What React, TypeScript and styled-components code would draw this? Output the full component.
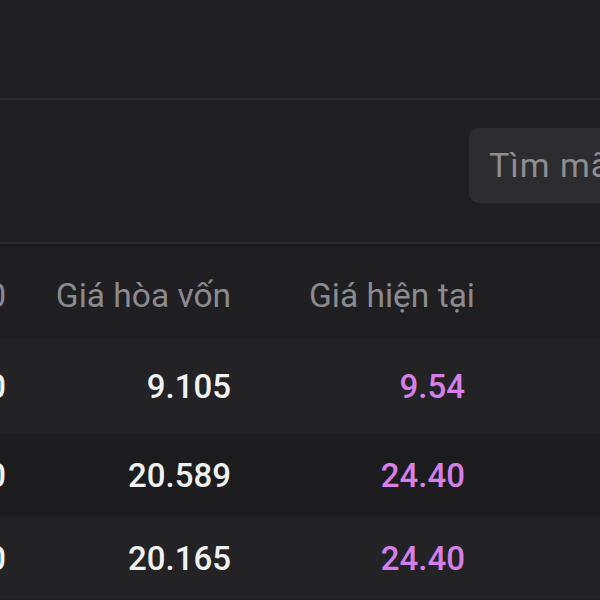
import React from 'react';
import styled, { createGlobalStyle } from 'styled-components';

const GlobalStyle = createGlobalStyle`
  html, body {
    margin: 0;
    padding: 0;
    background: #202023;
  }
  body {
    font-family: Roboto, "Noto Sans", "Liberation Sans", sans-serif;
  }
`;

const Page = styled.div`
  width: 600px;
  height: 600px;
  overflow: hidden;
  background: #202023;
  display: flex;
  flex-direction: column;
`;

const TopBar = styled.div`
  height: 98px;
  flex-shrink: 0;
`;

const Divider = styled.div<{ $double?: boolean }>`
  flex-shrink: 0;
  height: 2px;
  background: #2d2d31;
  border-bottom: ${({ $double }) => ($double ? '2px solid #19191b' : 'none')};
`;

const SearchRow = styled.div`
  height: 142px;
  flex-shrink: 0;
  display: flex;
  align-items: center;
  justify-content: flex-end;
`;

const SearchBox = styled.div`
  width: 170px;
  height: 75px;
  margin-right: -39px;
  margin-top: -12px;
  flex-shrink: 0;
  box-sizing: border-box;
  padding-left: 20px;
  display: flex;
  align-items: center;
  background: #2d2d30;
  border-radius: 10px;
  color: #8e8e92;
  font-size: 34px;
  letter-spacing: 1px;
  white-space: nowrap;
  overflow: hidden;
`;

const Row = styled.div<{ $bg: string; $height: number; $shift?: number }>`
  display: grid;
  grid-template-columns: 6px 225px 244px 1fr;
  align-items: center;
  box-sizing: border-box;
  height: ${({ $height }) => $height}px;
  padding-top: ${({ $shift }) => $shift ?? 0}px;
  flex-shrink: 0;
  background: ${({ $bg }) => $bg};
`;

const Cell = styled.div<{ $pad?: number }>`
  display: flex;
  justify-content: flex-end;
  overflow: hidden;
  white-space: nowrap;
  padding-right: ${({ $pad }) => $pad ?? 0}px;
`;

const HeadText = styled.span`
  font-size: 33.5px;
  color: #8b8b8f;
`;

const Value = styled.span<{ $purple?: boolean }>`
  font-size: 33px;
  font-weight: 500;
  color: ${({ $purple }) => ($purple ? '#d77fe8' : '#f2f2f2')};
`;

const rows = [
  { lead: '0', cost: '9.105', price: '9.54', bg: '#232326', height: 95 },
  { lead: '0', cost: '20.589', price: '24.40', bg: '#1c1c1f', height: 83 },
  { lead: '0', cost: '20.165', price: '24.40', bg: '#232326', height: 82 },
];

export default function App() {
  return (
    <>
      <GlobalStyle />
      <Page>
        <TopBar />
        <Divider />
        <SearchRow>
          <SearchBox>Tìm mã</SearchBox>
        </SearchRow>
        <Divider $double />
        <Row $bg="#1f1f22" $height={93} $shift={6}>
          <Cell>
            <HeadText>0</HeadText>
          </Cell>
          <Cell>
            <HeadText>Giá hòa vốn</HeadText>
          </Cell>
          <Cell>
            <HeadText>Giá hiện tại</HeadText>
          </Cell>
          <div />
        </Row>
        {rows.map((r, i) => (
          <Row key={i} $bg={r.bg} $height={r.height}>
            <Cell>
              <Value>{r.lead}</Value>
            </Cell>
            <Cell>
              <Value>{r.cost}</Value>
            </Cell>
            <Cell $pad={10}>
              <Value $purple>{r.price}</Value>
            </Cell>
            <div />
          </Row>
        ))}
      </Page>
    </>
  );
}
